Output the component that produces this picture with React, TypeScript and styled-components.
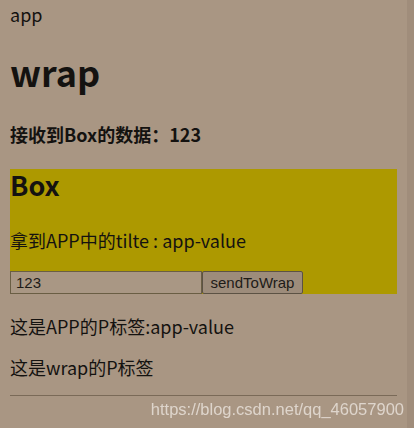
import React from 'react';
import styled, {createGlobalStyle} from "styled-components";

const GlobalStyle = createGlobalStyle`
    html, body {
        margin: 0;
        padding: 0;
        background: #a99683;
    }
    body {
        font-family: "Noto Sans CJK SC", "Open Sans", sans-serif;
        color: #141210;
    }
`

export default function App() {
    return (
        <>
            <GlobalStyle/>
            <StyledApp>
                <AppTitle>app</AppTitle>
                <Wrap>
                    <WrapTitle>wrap</WrapTitle>
                    <Received>接收到Box的数据：123</Received>
                    <Box>
                        <BoxTitle>Box</BoxTitle>
                        <BoxText>拿到APP中的tilte : app-value</BoxText>
                        <SendRow>
                            <ValueInput defaultValue="123"/>
                            <SendButton>sendToWrap</SendButton>
                        </SendRow>
                    </Box>
                    <Paragraph>这是APP的P标签:app-value</Paragraph>
                    <Paragraph $gap={17}>这是wrap的P标签</Paragraph>
                </Wrap>
                <Divider/>
            </StyledApp>
            <ScrollTrack/>
            <Watermark>https://blog.csdn.net/qq_46057900</Watermark>
        </>
    );
}

const StyledApp = styled.div`
    width: 387px;
    padding: 2px 0 0 10px;
`
const AppTitle = styled.div`
    font-size: 18px;
    line-height: 24px;
`
const Wrap = styled.div`
    display: flex;
    flex-direction: column;
`
const WrapTitle = styled.h1`
    margin: 23px 0 0;
    font-size: 36px;
    line-height: 44px;
    font-weight: 700;
`
const Received = styled.h4`
    margin: 29px 0 0;
    font-size: 18px;
    line-height: 24px;
    font-weight: 700;
`
const Box = styled.div`
    margin-top: 23px;
    background: #ad9900;
    display: flex;
    flex-direction: column;
`
const BoxTitle = styled.h2`
    margin: 0;
    font-size: 27px;
    line-height: 32px;
    font-weight: 700;
`
const BoxText = styled.p`
    margin: 27px 0 0;
    font-size: 18px;
    line-height: 24px;
`
const SendRow = styled.div`
    margin-top: 19px;
    display: flex;
    height: 23px;
`
const ValueInput = styled.input`
    box-sizing: border-box;
    width: 192px;
    height: 23px;
    margin: 0;
    padding: 0 5px;
    border: 1px solid #6a5e44;
    background: #a99784;
    color: #1e1b18;
    font-family: "Liberation Sans", Arial, sans-serif;
    font-size: 15px;
    outline: none;
`
const SendButton = styled.button`
    box-sizing: border-box;
    width: 101px;
    height: 23px;
    margin: 0;
    padding: 0 6px;
    border: 1px solid #5c5244;
    border-radius: 2px;
    background: #9d8c7b;
    color: #1e1b18;
    font-family: "Liberation Sans", Arial, sans-serif;
    font-size: 15px;
`
const Paragraph = styled.p<{ $gap?: number }>`
    margin: ${p => p.$gap ?? 20}px 0 0;
    font-size: 18px;
    line-height: 24px;
`
const Divider = styled.hr`
    margin: 16px 0 0;
    border: none;
    border-top: 1px solid #7a6a58;
`
const ScrollTrack = styled.div`
    position: fixed;
    top: 0;
    right: 0;
    bottom: 0;
    width: 7px;
    background: #a08d7b;
`
const Watermark = styled.div`
    position: fixed;
    right: 10px;
    top: 399px;
    font-family: "Liberation Sans", Arial, sans-serif;
    font-size: 16.5px;
    line-height: 20px;
    color: #e4dcd4;
    opacity: 0.9;
`
